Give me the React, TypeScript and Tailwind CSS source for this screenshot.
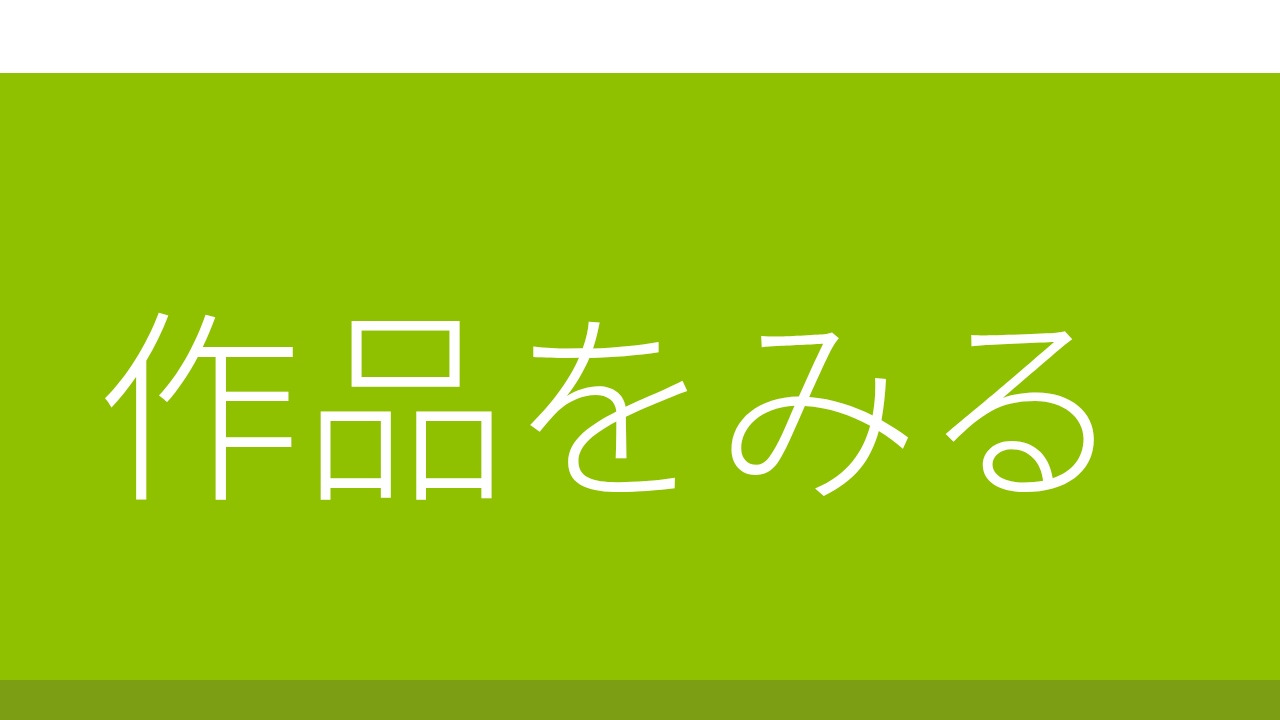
import React from "react";

const App = () => {
  return (
    <div className="w-[1280px] h-[720px] overflow-hidden bg-white flex flex-col">
      <div className="h-[73px] bg-white" />
      <div className="h-[607px] bg-[#8fc100] pt-[218px] pl-[96px]">
        <p
          className="text-white text-[206px] font-light leading-none whitespace-nowrap"
          style={{ fontFamily: '"Noto Sans CJK JP", "Noto Sans", sans-serif' }}
        >
          作品をみる
        </p>
      </div>
      <div className="h-[40px] bg-[#7b9e15]" />
    </div>
  );
};

export default App;
